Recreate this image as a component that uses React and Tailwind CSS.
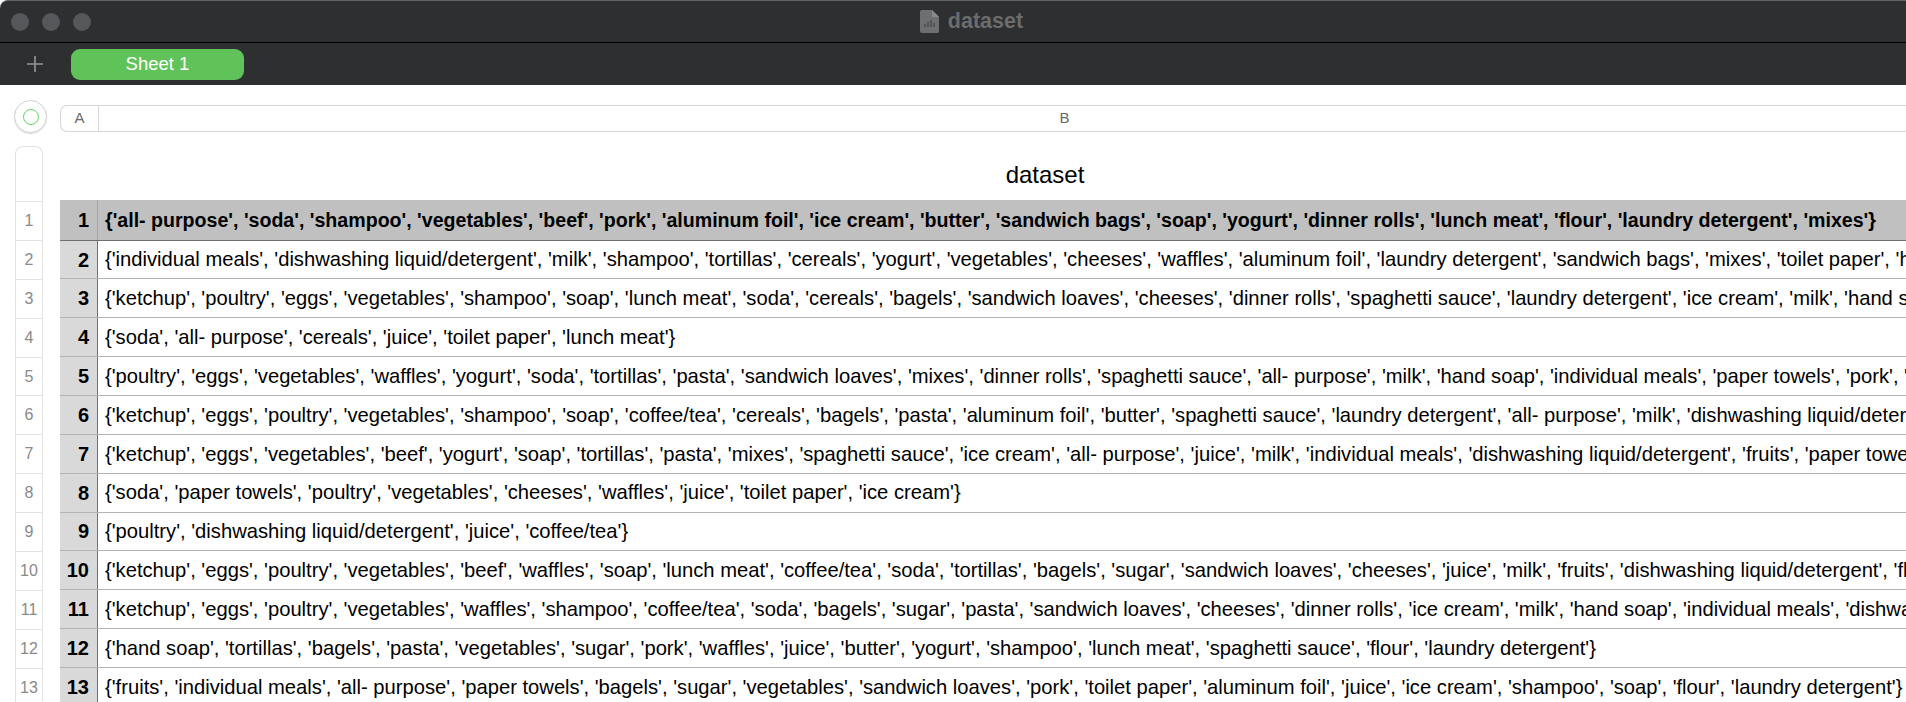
import React from 'react';

const rows = [
  "{'all- purpose', 'soda', 'shampoo', 'vegetables', 'beef', 'pork', 'aluminum foil', 'ice cream', 'butter', 'sandwich bags', 'soap', 'yogurt', 'dinner rolls', 'lunch meat', 'flour', 'laundry detergent', 'mixes'}",
  "{'individual meals', 'dishwashing liquid/detergent', 'milk', 'shampoo', 'tortillas', 'cereals', 'yogurt', 'vegetables', 'cheeses', 'waffles', 'aluminum foil', 'laundry detergent', 'sandwich bags', 'mixes', 'toilet paper', 'hand soap'}",
  "{'ketchup', 'poultry', 'eggs', 'vegetables', 'shampoo', 'soap', 'lunch meat', 'soda', 'cereals', 'bagels', 'sandwich loaves', 'cheeses', 'dinner rolls', 'spaghetti sauce', 'laundry detergent', 'ice cream', 'milk', 'hand soap'}",
  "{'soda', 'all- purpose', 'cereals', 'juice', 'toilet paper', 'lunch meat'}",
  "{'poultry', 'eggs', 'vegetables', 'waffles', 'yogurt', 'soda', 'tortillas', 'pasta', 'sandwich loaves', 'mixes', 'dinner rolls', 'spaghetti sauce', 'all- purpose', 'milk', 'hand soap', 'individual meals', 'paper towels', 'pork', 'juice'}",
  "{'ketchup', 'eggs', 'poultry', 'vegetables', 'shampoo', 'soap', 'coffee/tea', 'cereals', 'bagels', 'pasta', 'aluminum foil', 'butter', 'spaghetti sauce', 'laundry detergent', 'all- purpose', 'milk', 'dishwashing liquid/detergent'}",
  "{'ketchup', 'eggs', 'vegetables', 'beef', 'yogurt', 'soap', 'tortillas', 'pasta', 'mixes', 'spaghetti sauce', 'ice cream', 'all- purpose', 'juice', 'milk', 'individual meals', 'dishwashing liquid/detergent', 'fruits', 'paper towels'}",
  "{'soda', 'paper towels', 'poultry', 'vegetables', 'cheeses', 'waffles', 'juice', 'toilet paper', 'ice cream'}",
  "{'poultry', 'dishwashing liquid/detergent', 'juice', 'coffee/tea'}",
  "{'ketchup', 'eggs', 'poultry', 'vegetables', 'beef', 'waffles', 'soap', 'lunch meat', 'coffee/tea', 'soda', 'tortillas', 'bagels', 'sugar', 'sandwich loaves', 'cheeses', 'juice', 'milk', 'fruits', 'dishwashing liquid/detergent', 'flour'}",
  "{'ketchup', 'eggs', 'poultry', 'vegetables', 'waffles', 'shampoo', 'coffee/tea', 'soda', 'bagels', 'sugar', 'pasta', 'sandwich loaves', 'cheeses', 'dinner rolls', 'ice cream', 'milk', 'hand soap', 'individual meals', 'dishwashing liquid/detergent'}",
  "{'hand soap', 'tortillas', 'bagels', 'pasta', 'vegetables', 'sugar', 'pork', 'waffles', 'juice', 'butter', 'yogurt', 'shampoo', 'lunch meat', 'spaghetti sauce', 'flour', 'laundry detergent'}",
  "{'fruits', 'individual meals', 'all- purpose', 'paper towels', 'bagels', 'sugar', 'vegetables', 'sandwich loaves', 'pork', 'toilet paper', 'aluminum foil', 'juice', 'ice cream', 'shampoo', 'soap', 'flour', 'laundry detergent'}",
];

function FileIcon() {
  return (
    <svg width="19" height="23" viewBox="0 0 19 23" className="mr-[9px]">
      <path d="M2 0h10l7 7v14a2 2 0 0 1-2 2H2a2 2 0 0 1-2-2V2a2 2 0 0 1 2-2z" fill="#6e6f70" />
      <path d="M12 0l7 7h-6a1 1 0 0 1-1-1z" fill="#8a8b8c" />
      <path d="M5 17v-3M8 17v-5M11 17v-7M14 17v-4" stroke="#4d4e4f" strokeWidth="1.6" />
    </svg>
  );
}

export default function App() {
  return (
    <div className="w-[1906px] h-[702px] overflow-hidden bg-white flex flex-col font-['Liberation_Sans',Arial,sans-serif]">
      <header className="h-[43px] shrink-0 bg-[#2e2f31] border-t border-t-[#636466] border-b border-b-black rounded-tl-[8px] flex items-center">
        <div className="flex gap-[13px] pl-[11px]">
          <span className="w-[18px] h-[18px] rounded-full bg-[#56575a]" />
          <span className="w-[18px] h-[18px] rounded-full bg-[#56575a]" />
          <span className="w-[18px] h-[18px] rounded-full bg-[#56575a]" />
        </div>
        <div className="flex-1 flex items-center justify-center pr-[54px]">
          <FileIcon />
          <span className="text-[21.5px] font-bold text-[#6b6c6d]">dataset</span>
        </div>
      </header>

      <div className="h-[42px] shrink-0 bg-[#2e2f31] flex items-center">
        <svg width="16" height="16" viewBox="0 0 16 16" className="ml-[27px]">
          <path d="M8 0v16M0 8h16" stroke="#97989a" strokeWidth="1.6" />
        </svg>
        <div className="ml-[28px] w-[173px] h-[31px] rounded-[9px] bg-[#5fc35a] text-white text-[18.5px] flex items-center justify-center">
          Sheet 1
        </div>
      </div>

      <div className="flex-1 flex min-h-0">
        <div className="w-[60px] shrink-0 flex flex-col pt-[15px] pl-[15px]">
          <div className="w-[33px] h-[33px] shrink-0 -ml-[1px] rounded-full border border-[#cfcfcf] shadow-[0_1px_1px_rgba(0,0,0,0.15)] flex items-center justify-center">
            <div className="w-[16px] h-[16px] rounded-full border-[1.5px] border-[#66d460]" />
          </div>
          <div className="mt-[13px] w-[28px] shrink-0 rounded-t-[8px] border border-b-0 border-[#e2e2e2] flex flex-col">
            <div className="h-[54px] shrink-0" />
            {rows.map((_, i) => (
              <div key={i} className="h-[38.9px] shrink-0 border-t border-[#e2e2e2] flex items-center justify-center text-[16px] text-[#8a8a8a]">
                {i + 1}
              </div>
            ))}
          </div>
        </div>

        <div className="w-[1970px] shrink-0 pt-[20px]">
          <div className="h-[27px] rounded-l-[7px] border border-r-0 border-[#d6d6d6] flex items-center text-[15px] text-[#6a6a6a]">
            <div className="w-[38px] h-full shrink-0 border-r border-[#d6d6d6] flex items-center justify-center">A</div>
            <div className="flex-1 text-center">B</div>
          </div>
          <div className="h-[68px] flex items-center justify-center text-[24px] text-black pt-[18px]">dataset</div>
          {rows.map((text, i) => (
            <div
              key={i}
              className={i === 0
                ? 'h-[40.6px] flex bg-[#bfc0bf] border-b border-[#6f6f6f] font-bold text-black text-[19.6px]'
                : 'h-[38.85px] flex border-b border-[#b4b4b4] text-black text-[20.2px]'}
            >
              <div className={i === 0
                ? 'w-[38px] shrink-0 border-r border-[#a9a9a9] flex items-center justify-end pr-[8px] text-[20px] font-bold'
                : 'w-[38px] shrink-0 bg-[#d9d9d9] border-r border-[#6f6f6f] flex items-center justify-end pr-[8px] text-[20px] font-bold'}>
                {i + 1}
              </div>
              <div className={i === 0
                ? 'flex-1 min-w-0 overflow-hidden whitespace-nowrap flex items-center pl-[7px] pt-[2px]'
                : 'flex-1 min-w-0 overflow-hidden whitespace-nowrap flex items-center pl-[7px]'}>{text}</div>
            </div>
          ))}
        </div>
      </div>
    </div>
  );
}
